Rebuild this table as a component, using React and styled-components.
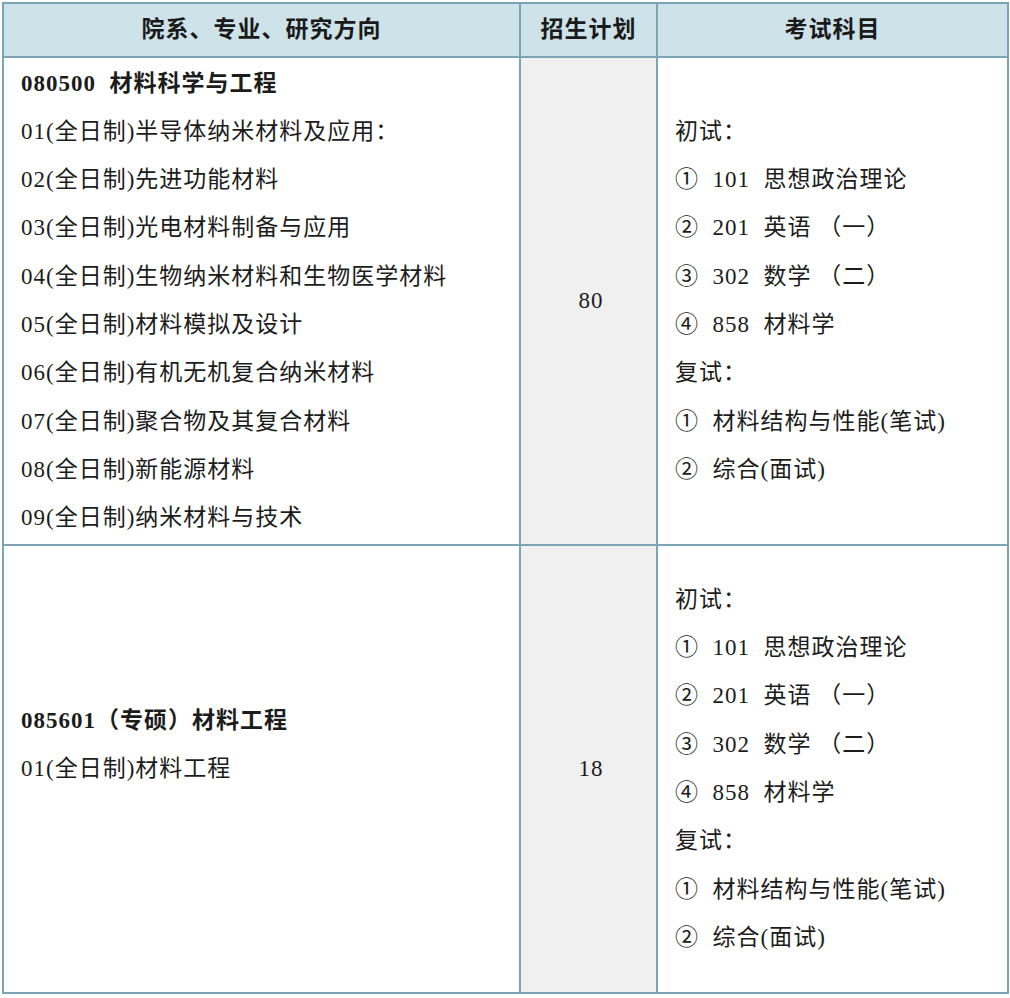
import React from 'react';
import styled, { createGlobalStyle } from 'styled-components';

const BORDER = '#7ba4b5';
const HEAD_BG = '#cee2e9';
const PLAN_BG = '#f0f0f0';
const FONT = '"Liberation Serif", "Noto Sans CJK SC", serif';

const GlobalStyle = createGlobalStyle`
  html, body {
    margin: 0;
    padding: 0;
    background: #ffffff;
  }
  body {
    font-family: ${FONT};
    color: #1c1c1c;
  }
`;

const Page = styled.div`
  padding: 2px 0 0 2px;
`;

const Table = styled.table`
  width: 1005px;
  border-collapse: collapse;
  table-layout: fixed;
  font-family: ${FONT};
  font-size: 23px;
  letter-spacing: 1px;
`;

const HeadCell = styled.th`
  height: 54px;
  padding: 0;
  line-height: 30px;
  background: ${HEAD_BG};
  border: 2px solid ${BORDER};
  font-weight: 700;
  font-size: 23px;
  letter-spacing: 1px;
  text-align: center;
  vertical-align: middle;
  color: #1a1a1a;
  box-sizing: border-box;
`;

const Row = styled.tr`
  height: ${(p) => p.$h}px;
`;

const Cell = styled.td`
  padding: 0 12px 0 17px;
  border: 2px solid ${BORDER};
  vertical-align: middle;
  background: ${(p) => (p.$plan ? PLAN_BG : '#ffffff')};
  text-align: ${(p) => (p.$plan ? 'center' : 'left')};
`;

const Line = styled.div`
  line-height: 48.3px;
  white-space: pre;
  font-weight: ${(p) => (p.$bold ? 700 : 400)};
`;

const majors = [
  {
    title: '080500  材料科学与工程',
    items: [
      '01(全日制)半导体纳米材料及应用：',
      '02(全日制)先进功能材料',
      '03(全日制)光电材料制备与应用',
      '04(全日制)生物纳米材料和生物医学材料',
      '05(全日制)材料模拟及设计',
      '06(全日制)有机无机复合纳米材料',
      '07(全日制)聚合物及其复合材料',
      '08(全日制)新能源材料',
      '09(全日制)纳米材料与技术',
    ],
    plan: '80',
    height: 488,
  },
  {
    title: '085601（专硕）材料工程',
    items: ['01(全日制)材料工程', ' '],
    plan: '18',
    height: 448,
  },
];

const exams = [
  '初试：',
  '①  101  思想政治理论',
  '②  201  英语 （一）',
  '③  302  数学 （二）',
  '④  858  材料学',
  '复试：',
  '①  材料结构与性能(笔试)',
  '②  综合(面试)',
];

const App = () => (
  <Page>
    <GlobalStyle />
    <Table>
      <colgroup>
        <col style={{ width: 517 }} />
        <col style={{ width: 137 }} />
        <col style={{ width: 351 }} />
      </colgroup>
      <thead>
        <tr>
          <HeadCell>院系、专业、研究方向</HeadCell>
          <HeadCell>招生计划</HeadCell>
          <HeadCell>考试科目</HeadCell>
        </tr>
      </thead>
      <tbody>
        {majors.map((m) => (
          <Row key={m.title} $h={m.height}>
            <Cell>
              <Line $bold>{m.title}</Line>
              {m.items.map((it, i) => (
                <Line key={i}>{it}</Line>
              ))}
            </Cell>
            <Cell $plan>{m.plan}</Cell>
            <Cell>
              {exams.map((e, i) => (
                <Line key={i}>{e}</Line>
              ))}
            </Cell>
          </Row>
        ))}
      </tbody>
    </Table>
  </Page>
);

export default App;
